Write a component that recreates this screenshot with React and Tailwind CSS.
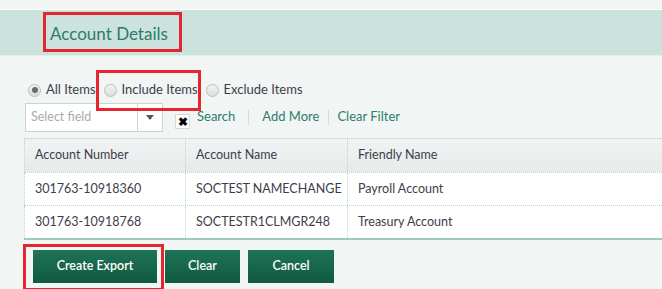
import React from 'react';

const Radio = ({ checked, label }) => (
  <label className="flex items-center gap-[5px] text-[13px] text-[#3d3d4a]">
    <span className="w-[13px] h-[13px] rounded-full border border-[#b9bfbf] bg-gradient-to-b from-[#f4f4f4] to-[#dcdcdc] flex items-center justify-center">
      {checked && <span className="w-[6px] h-[6px] rounded-full bg-[#6b6b6b]" />}
    </span>
    {label}
  </label>
);

const rows = [
  ['301763-10918360', 'SOCTEST NAMECHANGE', 'Payroll Account'],
  ['301763-10918768', 'SOCTESTR1CLMGR248', 'Treasury Account'],
];

const App = () => {
  return (
    <div className="w-[662px] h-[289px] overflow-hidden bg-[#f1f5f4] font-['Lato',sans-serif]">
      {/* Header band */}
      <div className="h-[9px]" />
      <div className="h-[1px] bg-white" />
      <div className="h-[46px] bg-[#cce2dc] border-b border-[#e2efeb] pl-[43px] pt-[2px]">
        <div className="w-[139px] h-[40px] border-[3px] border-[#e3262f] flex items-center pl-[4px] pt-[3px]">
          <span className="text-[17px] text-[#2b7c6c]">Account Details</span>
        </div>
      </div>

      {/* Radio options */}
      <div className="flex items-center gap-[8px] pl-[28px] mt-[24px] h-[20px]">
        <Radio checked label="All Items" />
        <div className="relative">
          <Radio label="Include Items" />
          <div className="absolute -left-[8px] -right-[3px] -top-[10px] -bottom-[11px] border-[3px] border-[#e3262f]" />
        </div>
        <Radio label="Exclude Items" />
      </div>

      {/* Filter row */}
      <div className="flex items-center pl-[25px] mt-[3px] h-[29px]">
        <div className="w-[138px] h-[29px] bg-white border border-[#cdd3d2] flex">
          <span className="flex-1 flex items-center pl-[5px] text-[12.5px] text-[#a8acac]">Select field</span>
          <span className="w-[25px] border-l border-[#cdd3d2] flex items-center justify-center">
            <span className="w-0 h-0 border-l-[4px] border-r-[4px] border-t-[5px] border-l-transparent border-r-transparent border-t-[#555]" />
          </span>
        </div>
        <div className="ml-[12px] mt-[8px] w-[15px] h-[15px] bg-white border border-[#d5dad9] flex items-center justify-center text-[12px] font-bold leading-none text-black">
          ✖
        </div>
        <div className="flex items-center text-[13px] text-[#2c7d6d] mt-[-1px]">
          <span className="ml-[7px]">Search</span>
          <span className="mx-[13px] w-px h-[15px] bg-[#d4dbd9]" />
          <span>Add More</span>
          <span className="ml-[9px] mr-[8px] w-px h-[15px] bg-[#d4dbd9]" />
          <span>Clear Filter</span>
        </div>
      </div>

      {/* Table */}
      <div className="ml-[24px] mt-[6px] border-b-2 border-[#9fcbbb]">
        <div className="flex h-[34px] bg-gradient-to-b from-[#f0f3f3] to-[#e6ebea] border-t border-dotted border-[#b8d6cd] text-[12.5px] text-[#3d3d4a]">
          <div className="w-[162px] flex items-center pl-[10px] border-l border-r border-dotted border-[#b8d6cd]">Account Number</div>
          <div className="w-[162px] flex items-center pl-[10px] border-r border-dotted border-[#b8d6cd]">Account Name</div>
          <div className="flex-1 flex items-center pl-[10px]">Friendly Name</div>
        </div>
        {rows.map((r, i) => (
          <div key={i} className="flex h-[33px] bg-white border-t border-dotted border-[#b8d6cd] text-[12.5px] text-[#3d3d4a]">
            <div className="w-[162px] flex items-center pl-[10px] border-l border-r border-dotted border-[#b8d6cd]">{r[0]}</div>
            <div className="w-[162px] flex items-center pl-[10px] border-r border-dotted border-[#b8d6cd]">{r[1]}</div>
            <div className="flex-1 flex items-center pl-[10px]">{r[2]}</div>
          </div>
        ))}
      </div>

      {/* Buttons */}
      <div className="flex gap-[8px] pl-[33px] mt-[10px]">
        <div className="relative">
          <button className="w-[124px] h-[33px] bg-gradient-to-b from-[#1f7357] to-[#0f5a40] text-white text-[12.5px] font-semibold">Create Export</button>
          <div className="absolute -left-[10px] -right-[7px] -top-[6px] -bottom-[8px] border-[3px] border-[#e3262f]" />
        </div>
        <button className="w-[75px] h-[33px] bg-gradient-to-b from-[#1f7357] to-[#0f5a40] text-white text-[12.5px] font-semibold">Clear</button>
        <button className="w-[86px] h-[33px] bg-gradient-to-b from-[#1f7357] to-[#0f5a40] text-white text-[12.5px] font-semibold">Cancel</button>
      </div>
    </div>
  );
};

export default App;
